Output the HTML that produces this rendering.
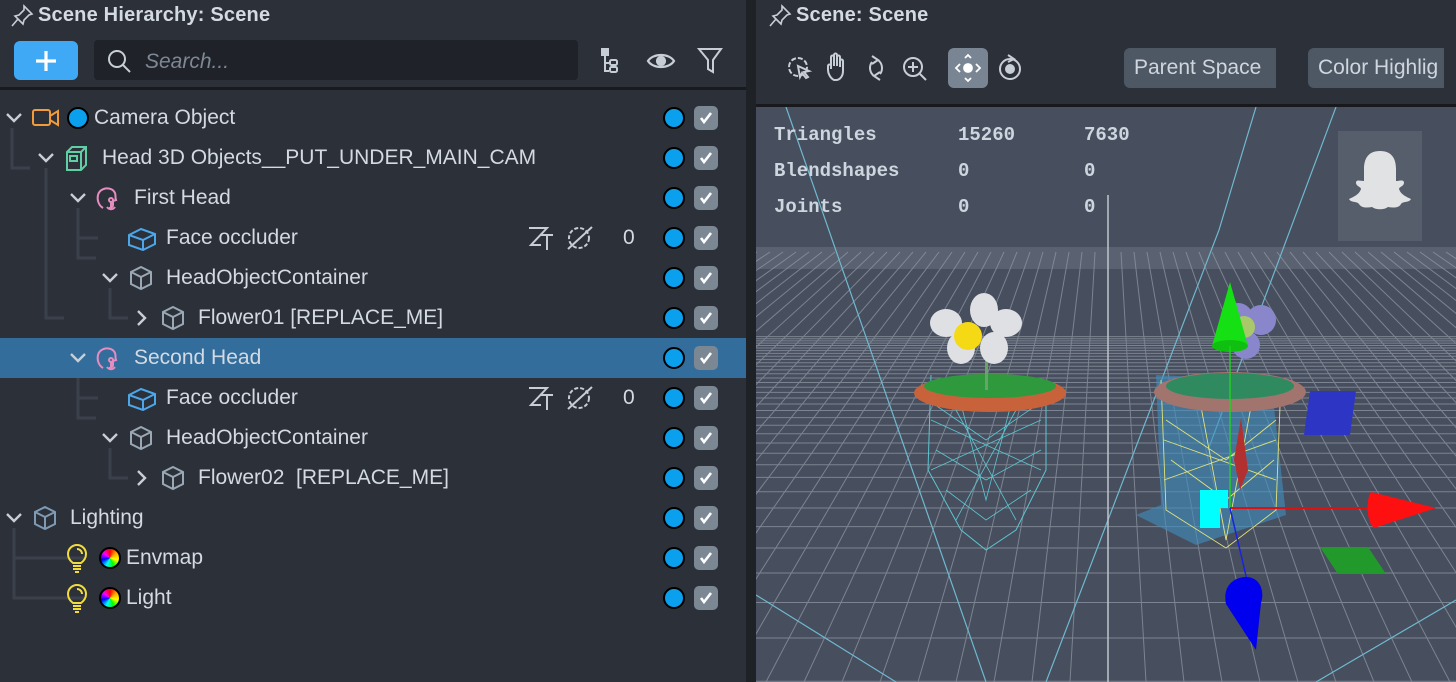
<!DOCTYPE html>
<html><head><meta charset="utf-8"><style>
*{margin:0;padding:0;box-sizing:border-box}
body{width:1456px;height:682px;overflow:hidden;background:#2c3038;font-family:"Liberation Sans","DejaVu Sans",sans-serif;position:relative}
.lp{position:absolute;left:0;top:0;width:746px;height:682px;background:#2c3038}
.sep{position:absolute;left:746px;top:0;width:10px;height:682px;background:#1e2126}
.rp{position:absolute;left:756px;top:0;width:700px;height:682px}
.title{position:absolute;top:4px;font-weight:bold;font-size:20px;color:#d4dae2;letter-spacing:0.2px}
.row{position:absolute;left:0;width:746px;height:40px}
.row .t{position:absolute;top:8px;font-size:21px;color:#d3dae3;white-space:nowrap}
.dot{position:absolute;left:663px;top:9px;width:22px;height:22px;border-radius:50%;background:#0aa0ee;border:2px solid #000}
.cb{position:absolute;left:694px;top:8px;width:24px;height:24px;border-radius:5px;background:#7c8794}
.cb svg{position:absolute;left:4px;top:4px}
.ic{position:absolute}
.mono{font-family:"Liberation Mono","DejaVu Sans Mono",monospace;font-size:19px;color:#cdd5df;position:absolute;font-weight:bold}
.btn{position:absolute;top:48px;height:40px;background:#4e5864;border-radius:6px;color:#cfd6df;font-size:21px;padding:8px 4px 0 10px;white-space:nowrap;overflow:hidden}
</style></head><body>
<div class="lp">
 <svg class="ic" style="left:10px;top:4px" width="26" height="24" viewBox="0 0 26 24" fill="none" stroke="#c8ced6" stroke-width="1.6"><path d="M14 2l8 8-3 1-5 5-1 4-8-8 4-1 5-5z M8 15l-6 7"/></svg>
 <div class="title" style="left:38px">Scene Hierarchy: Scene</div>
 <div style="position:absolute;left:14px;top:41px;width:64px;height:39px;background:#3fa9f5;border-radius:6px"></div>
 <svg class="ic" style="left:34px;top:49px" width="24" height="24"><path d="M12 2v20M2 12h20" stroke="#fff" stroke-width="3.2"/></svg>
 <div style="position:absolute;left:94px;top:40px;width:484px;height:40px;background:#1f2228;border-radius:4px"></div>
 <svg class="ic" style="left:106px;top:48px" width="28" height="28" fill="none" stroke="#c8ced6" stroke-width="2"><circle cx="11" cy="11" r="8"/><path d="M17 17l7 7"/></svg>
 <div style="position:absolute;left:145px;top:50px;font-size:21px;font-style:italic;color:#7e8894">Search...</div>
 <svg class="ic" style="left:600px;top:48px" width="30" height="28" fill="none" stroke="#c8ced6" stroke-width="2"><rect x="2" y="1" width="6" height="6" fill="#c8ced6"/><path d="M5 7v16h4M5 15h4"/><rect x="10" y="12" width="7" height="5" rx="1.5"/><rect x="10" y="19" width="7" height="5" rx="1.5"/></svg>
 <svg class="ic" style="left:646px;top:48px" width="30" height="26" fill="none" stroke="#c8ced6" stroke-width="2.2"><path d="M2 13C7 5 23 5 28 13C23 21 7 21 2 13z"/><circle cx="15" cy="13" r="4" fill="#c8ced6"/></svg>
 <svg class="ic" style="left:697px;top:47px" width="26" height="28" fill="none" stroke="#c8ced6" stroke-width="2"><path d="M2 2h22l-8 11v12l-5-3v-9z"/></svg>
 <div style="position:absolute;left:0;top:87px;width:746px;height:3px;background:#181a1e"></div>

 <svg class="ic" style="left:0;top:98px" width="200" height="510" fill="none" stroke="#3b414b" stroke-width="3">
  <path d="M12 30v40h18"/><path d="M46 70v150h18"/><path d="M78 110v30h20M78 140v20h18"/><path d="M110 190v30h18"/><path d="M78 270v30h20M78 300v20h18"/><path d="M110 350v30h18"/><path d="M14 430v30h70M14 460v40h70"/>
 </svg>

 <div class="row" style="top:338px;background:#336d9b"></div>

 <div class="row" style="top:98px">
  <svg class="ic" style="left:5px;top:13px" width="18" height="14" fill="none" stroke="#c8ced6" stroke-width="2.4"><path d="M2 3l7 7 7-7"/></svg>
  <svg class="ic" style="left:31px;top:10px" width="30" height="20" fill="none" stroke="#f39a3a" stroke-width="2"><rect x="2" y="2" width="17" height="15" rx="2"/><path d="M19 8l8-5v14l-8-5"/></svg>
  <div class="dot" style="left:67px;top:9px"></div>
  <div class="t" style="left:94px">Camera Object</div>
 </div>
 <div class="row" style="top:138px">
  <svg class="ic" style="left:37px;top:13px" width="18" height="14" fill="none" stroke="#c8ced6" stroke-width="2.4"><path d="M2 3l7 7 7-7"/></svg>
  <svg class="ic" style="left:64px;top:7px" width="26" height="27" fill="none" stroke="#5ed0a4" stroke-width="2"><path d="M3 7l5-5h14v18l-5 5H3z M3 7h14v18 M17 7l5-5"/><rect x="6" y="11" width="7" height="5"/></svg>
  <div class="t" style="left:102px">Head 3D Objects__PUT_UNDER_MAIN_CAM</div>
 </div>
 <div class="row" style="top:178px">
  <svg class="ic" style="left:69px;top:13px" width="18" height="14" fill="none" stroke="#c8ced6" stroke-width="2.4"><path d="M2 3l7 7 7-7"/></svg>
  <svg class="ic" style="left:94px;top:6px" width="30" height="28" fill="none" stroke="#e58cc1" stroke-width="2"><path d="M9 24c-5-3-6-9-5-13 2-8 14-9 17-2 1 3 0 5 1 7l-3 1v4c0 2-2 3-4 3"/><circle cx="17" cy="16" r="2"/><path d="M17 18v8M13 23c2 3 6 3 8 0"/></svg>
  <div class="t" style="left:134px">First Head</div>
 </div>
 <div class="row" style="top:218px">
  <svg class="ic" style="left:126px;top:9px" width="32" height="24" fill="none" stroke="#4ba6ea" stroke-width="2"><path d="M3 8l12-6 14 5v10l-12 6-14-5z M3 8l14 5 12-6 M17 13v10"/></svg>
  <div class="t" style="left:166px">Face occluder</div>
  <svg class="ic" style="left:527px;top:7px" width="28" height="26" fill="none" stroke="#c8ced6" stroke-width="2"><path d="M2 3h18L4 20h10 M14 10h12 M20 10v15"/></svg>
  <svg class="ic" style="left:566px;top:7px" width="28" height="26" fill="none" stroke="#c8ced6" stroke-width="2"><circle cx="13" cy="13" r="10" stroke-dasharray="4 2"/><path d="M2 24L26 2"/></svg>
  <div class="t" style="left:623px">0</div>
 </div>
 <div class="row" style="top:258px">
  <svg class="ic" style="left:101px;top:13px" width="18" height="14" fill="none" stroke="#c8ced6" stroke-width="2.4"><path d="M2 3l7 7 7-7"/></svg>
  <svg class="ic" style="left:128px;top:7px" width="26" height="26" fill="none" stroke="#9aa7b4" stroke-width="2"><path d="M13 2l10 5v12l-10 5-10-5V7z M3 7l10 5 10-5 M13 12v12"/></svg>
  <div class="t" style="left:166px">HeadObjectContainer</div>
 </div>
 <div class="row" style="top:298px">
  <svg class="ic" style="left:135px;top:11px" width="14" height="18" fill="none" stroke="#c8ced6" stroke-width="2.4"><path d="M3 2l7 7-7 7"/></svg>
  <svg class="ic" style="left:160px;top:7px" width="26" height="26" fill="none" stroke="#9aa7b4" stroke-width="2"><path d="M13 2l10 5v12l-10 5-10-5V7z M3 7l10 5 10-5 M13 12v12"/></svg>
  <div class="t" style="left:198px">Flower01 [REPLACE_ME]</div>
 </div>
 <div class="row" style="top:338px">
  <svg class="ic" style="left:69px;top:13px" width="18" height="14" fill="none" stroke="#c8ced6" stroke-width="2.4"><path d="M2 3l7 7 7-7"/></svg>
  <svg class="ic" style="left:94px;top:6px" width="30" height="28" fill="none" stroke="#e58cc1" stroke-width="2"><path d="M9 24c-5-3-6-9-5-13 2-8 14-9 17-2 1 3 0 5 1 7l-3 1v4c0 2-2 3-4 3"/><circle cx="17" cy="16" r="2"/><path d="M17 18v8M13 23c2 3 6 3 8 0"/></svg>
  <div class="t" style="left:134px">Second Head</div>
 </div>
 <div class="row" style="top:378px">
  <svg class="ic" style="left:126px;top:9px" width="32" height="24" fill="none" stroke="#4ba6ea" stroke-width="2"><path d="M3 8l12-6 14 5v10l-12 6-14-5z M3 8l14 5 12-6 M17 13v10"/></svg>
  <div class="t" style="left:166px">Face occluder</div>
  <svg class="ic" style="left:527px;top:7px" width="28" height="26" fill="none" stroke="#c8ced6" stroke-width="2"><path d="M2 3h18L4 20h10 M14 10h12 M20 10v15"/></svg>
  <svg class="ic" style="left:566px;top:7px" width="28" height="26" fill="none" stroke="#c8ced6" stroke-width="2"><circle cx="13" cy="13" r="10" stroke-dasharray="4 2"/><path d="M2 24L26 2"/></svg>
  <div class="t" style="left:623px">0</div>
 </div>
 <div class="row" style="top:418px">
  <svg class="ic" style="left:101px;top:13px" width="18" height="14" fill="none" stroke="#c8ced6" stroke-width="2.4"><path d="M2 3l7 7 7-7"/></svg>
  <svg class="ic" style="left:128px;top:7px" width="26" height="26" fill="none" stroke="#9aa7b4" stroke-width="2"><path d="M13 2l10 5v12l-10 5-10-5V7z M3 7l10 5 10-5 M13 12v12"/></svg>
  <div class="t" style="left:166px">HeadObjectContainer</div>
 </div>
 <div class="row" style="top:458px">
  <svg class="ic" style="left:135px;top:11px" width="14" height="18" fill="none" stroke="#c8ced6" stroke-width="2.4"><path d="M3 2l7 7-7 7"/></svg>
  <svg class="ic" style="left:160px;top:7px" width="26" height="26" fill="none" stroke="#9aa7b4" stroke-width="2"><path d="M13 2l10 5v12l-10 5-10-5V7z M3 7l10 5 10-5 M13 12v12"/></svg>
  <div class="t" style="left:198px">Flower02&nbsp; [REPLACE_ME]</div>
 </div>
 <div class="row" style="top:498px">
  <svg class="ic" style="left:5px;top:13px" width="18" height="14" fill="none" stroke="#c8ced6" stroke-width="2.4"><path d="M2 3l7 7 7-7"/></svg>
  <svg class="ic" style="left:32px;top:7px" width="26" height="26" fill="none" stroke="#7f9ab4" stroke-width="2"><path d="M13 2l10 5v12l-10 5-10-5V7z M3 7l10 5 10-5 M13 12v12"/></svg>
  <div class="t" style="left:70px">Lighting</div>
 </div>
 <div class="row" style="top:538px">
  <svg class="ic" style="left:66px;top:6px" width="24" height="30" fill="none" stroke="#f2dc3c" stroke-width="2"><path d="M7 19c-4-3-5-6-5-9a9 9 0 0118 0c0 3-1 6-5 9z M7 22h8 M7 25h8 M9 28h4"/><path d="M11 5a5 5 0 015 5"/></svg>
  <div style="position:absolute;left:99px;top:9px;width:22px;height:22px;border-radius:50%;border:2px solid #000;background:conic-gradient(red,orange,yellow,lime,cyan,blue,magenta,red)"></div>
  <div class="t" style="left:126px">Envmap</div>
 </div>
 <div class="row" style="top:578px">
  <svg class="ic" style="left:66px;top:6px" width="24" height="30" fill="none" stroke="#f2dc3c" stroke-width="2"><path d="M7 19c-4-3-5-6-5-9a9 9 0 0118 0c0 3-1 6-5 9z M7 22h8 M7 25h8 M9 28h4"/><path d="M11 5a5 5 0 015 5"/></svg>
  <div style="position:absolute;left:99px;top:9px;width:22px;height:22px;border-radius:50%;border:2px solid #000;background:conic-gradient(red,orange,yellow,lime,cyan,blue,magenta,red)"></div>
  <div class="t" style="left:126px">Light</div>
 </div>
 <div id="dc"></div>
</div>
<div class="sep"></div>
<div class="rp">
 <div style="position:absolute;left:0;top:0;width:700px;height:104px;background:#2c3038"></div>
 <svg class="ic" style="left:12px;top:4px" width="26" height="24" viewBox="0 0 26 24" fill="none" stroke="#c8ced6" stroke-width="1.6"><path d="M14 2l8 8-3 1-5 5-1 4-8-8 4-1 5-5z M8 15l-6 7"/></svg>
 <div class="title" style="left:40px">Scene: Scene</div>
 <svg class="ic" style="left:30px;top:52px" width="240" height="34" fill="none" stroke="#c8ced6" stroke-width="2">
  <circle cx="12" cy="15" r="9" stroke-dasharray="5 2"/><path d="M12 14l11 5-5 1 4 5-2 1-4-5-2 4z" fill="#2c3038"/>
  <path d="M48 28c-4-2-6-7-6-10v-4c0-2 3-2 3 0v3V5c0-2 3-2 3 0v9V3c0-2 3-2 3 0v11V5c0-2 3-2 3 0v10V9c0-2 3-2 3 0v10c0 5-3 9-7 9z"/>
  <path d="M92 8a10 10 0 012 14M88 24a10 10 0 01-2-14M86 4l6 4-6 4M94 28l-6-4 6-4"/>
  <circle cx="127" cy="15" r="9"/><path d="M134 22l6 6M127 10v10M122 15h10"/>
  <circle cx="224" cy="17" r="10"/><circle cx="224" cy="17" r="4" fill="#c8ced6"/><path d="M222 3l6 4-6 3"/>
 </svg>
 <div style="position:absolute;left:192px;top:48px;width:40px;height:40px;border-radius:6px;background:#7a8594"></div>
 <svg class="ic" style="left:192px;top:48px" width="40" height="40" fill="none" stroke="#fff" stroke-width="1.8"><circle cx="20" cy="20" r="4" fill="#fff"/><path d="M12 16l-4 4 4 4M28 16l4 4-4 4M17 10l3-3 3 3M17 30l3 3 3-3"/></svg>
 <div class="btn" style="left:368px;width:152px;border-radius:6px 0 0 6px">Parent Space</div>
 <div class="btn" style="left:552px;width:136px;border-radius:6px 0 0 6px">Color Highlig</div>
 <div style="position:absolute;left:0;top:104px;width:700px;height:3px;background:#17191d"></div>
 <svg style="position:absolute;left:0;top:107px" width="700" height="575" viewBox="0 107 700 575">
  <rect x="0" y="107" width="700" height="575" fill="#474e5e"/>
  <rect x="0" y="247" width="700" height="22" fill="#5a6170"/>
  <g id="grid" stroke="#8e96a3" stroke-width="1" opacity="0.75"></g>
  <g stroke="#6fb9cf" stroke-width="1.2" fill="none">
   <path d="M30 107L230 682M0 595L140 682M463 230L290 682M500 107L463 230M700 600L560 682M580 107L452 450"/>
  </g>
  <line x1="352" y1="195" x2="352" y2="682" stroke="#c0c5cd" stroke-width="1.5"/>
  <rect x="582" y="131" width="84" height="110" fill="#565d6b"/>
  <path d="M624 151c12 0 16 8 16 18v12c4 0 8-2 8 2 0 3-5 4-5 6 2 6 8 8 12 10-2 4-8 2-10 5-2 4-8 4-13 3-4 3-12 3-16 0-5 1-11 1-13-3-2-3-8-1-10-5 4-2 10-4 12-10 0-2-5-3-5-6 0-4 4-2 8-2v-12c0-10 4-18 16-18z" fill="#e1e2e4"/>
  <g>
   <path d="M175 375L172 470 205 530 230 550 260 530 290 470 290 385" fill="none" stroke="#5dc5d0" stroke-width="1" />
   <path d="M172 400L230 440 288 400M180 450L230 480 285 450M190 490L230 520 275 490M200 385L230 500 260 385M175 420L285 470M285 420L175 470M200 410L260 520M260 410L200 520" stroke="#5dc5d0" stroke-width="0.8" fill="none"/>
   <ellipse cx="234" cy="393" rx="76" ry="19" fill="#c8623a"/>
   <ellipse cx="234" cy="386" rx="66" ry="12" fill="#2f9a3d"/>
   <rect x="229" y="350" width="3" height="40" fill="#6aa36a"/>
   <ellipse cx="228" cy="310" rx="14" ry="17" fill="#dfe0e4"/><ellipse cx="250" cy="323" rx="16" ry="14" fill="#dfe0e4"/><ellipse cx="190" cy="323" rx="16" ry="14" fill="#dfe0e4"/><ellipse cx="205" cy="348" rx="14" ry="16" fill="#dfe0e4"/><ellipse cx="238" cy="348" rx="14" ry="16" fill="#dfe0e4"/>
   <circle cx="212" cy="336" r="14" fill="#f5d914"/>
  </g>
  <g>
   <path d="M400 375L405 505 380 515 440 545 530 515 515 380z" fill="#3f8fc0" opacity="0.6"/>
   <path d="M405 380L410 510 470 548 520 510 525 380M410 420L470 460 520 420M415 460L470 500 518 460M440 380L470 540 500 380M408 440L520 480M520 440L408 480" stroke="#e2e27a" stroke-width="0.9" fill="none"/>
   <ellipse cx="474" cy="392" rx="76" ry="20" fill="#a2746e"/>
   <ellipse cx="474" cy="386" rx="64" ry="13" fill="#2f8a5f"/>
   <circle cx="482" cy="318" r="15" fill="#8a86cc"/><circle cx="505" cy="320" r="15" fill="#8a86cc"/><circle cx="490" cy="345" r="14" fill="#8a86cc"/>
   <circle cx="488" cy="327" r="11" fill="#a8c86a"/>
   <path d="M474 282L456 346 492 346z" fill="#14e014"/><ellipse cx="474" cy="346" rx="18" ry="6" fill="#10c010"/>
   <line x1="474" y1="346" x2="474" y2="508" stroke="#20d020" stroke-width="1.5"/>
   <path d="M485 418L492 470 484 490 478 460z" fill="#b33030"/>
   <path d="M554 391L600 391 594 435 548 435z" fill="#2d36c4"/>
   <path d="M564 547L612 547 630 574 582 574z" fill="#229a2b"/>
   <line x1="474" y1="508" x2="615" y2="508" stroke="#e01010" stroke-width="2"/>
   <path d="M615 492L680 508 618 528c-8-6-8-30-3-36z" fill="#ff1010"/>
   <rect x="444" y="490" width="20" height="38" fill="#0ff"/><rect x="444" y="490" width="28" height="18" fill="#0ff"/>
   <line x1="474" y1="508" x2="491" y2="580" stroke="#1a22e0" stroke-width="1.5"/>
   <path d="M470 604c-4-20 10-27 20-27 14 0 19 14 15 26l-5 47z" fill="#0000ee"/>
  </g>
 </svg>
 <div class="mono" style="left:18px;top:124px">Triangles</div><div class="mono" style="left:202px;top:124px">15260</div><div class="mono" style="left:328px;top:124px">7630</div>
 <div class="mono" style="left:18px;top:160px">Blendshapes</div><div class="mono" style="left:202px;top:160px">0</div><div class="mono" style="left:328px;top:160px">0</div>
 <div class="mono" style="left:18px;top:196px">Joints</div><div class="mono" style="left:202px;top:196px">0</div><div class="mono" style="left:328px;top:196px">0</div>
</div>
<script>
var dc=document.getElementById('dc'),h='';
for(var i=0;i<13;i++){var y=98+i*40;h+='<div class="row" style="top:'+y+'px;width:0"><div class="dot"></div><div class="cb"><svg width="16" height="16"><path d="M3 8l3 4 7-9" fill="none" stroke="#fff" stroke-width="2.6"/></svg></div></div>';}
dc.innerHTML=h;
var g=document.getElementById('grid'),s='',vx=352,vy=248;
for(var m=9;m<45;m++){var y=vy+3900/m;if(y>682)continue;s+='<line x1="0" x2="700" y1="'+y.toFixed(1)+'" y2="'+y.toFixed(1)+'"/>';}
for(var j=-60;j<=60;j++){var xt=vx+13*j,xb=vx+38*j;if(xt<-50||xt>750)continue;s+='<line x1="'+xt+'" y1="252" x2="'+xb+'" y2="682"/>';}
g.innerHTML=s;
</script>
</body></html>
